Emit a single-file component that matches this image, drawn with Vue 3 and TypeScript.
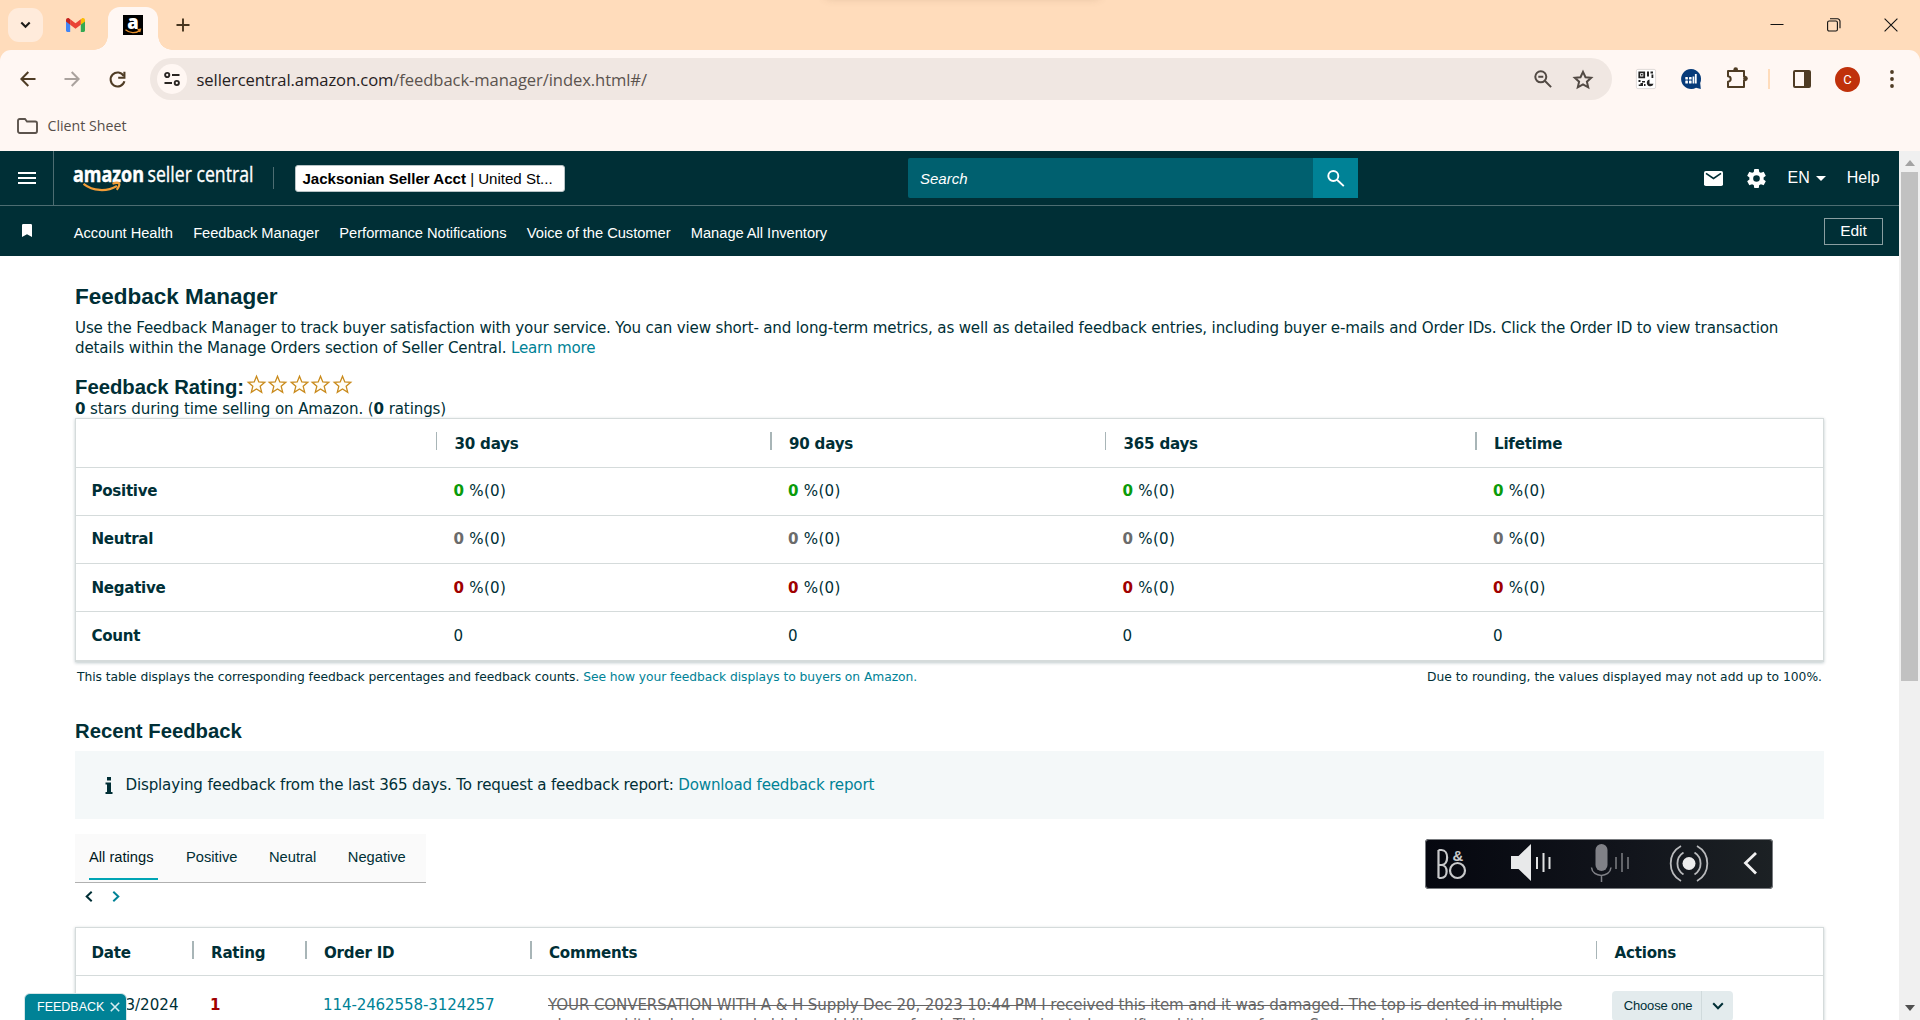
<script setup lang="ts">
interface Row { label: string; tone: string; values: string[] }

const favourites: string[] = ['Account Health', 'Feedback Manager', 'Performance Notifications', 'Voice of the Customer', 'Manage All Inventory']
const periods: string[] = ['30 days', '90 days', '365 days', 'Lifetime']
const rows: Row[] = [
  { label: 'Positive', tone: 'good', values: ['0', '0', '0', '0'] },
  { label: 'Neutral', tone: 'even', values: ['0', '0', '0', '0'] },
  { label: 'Negative', tone: 'bad', values: ['0', '0', '0', '0'] },
  { label: 'Count', tone: '', values: ['0', '0', '0', '0'] },
]
const tabs: string[] = ['All ratings', 'Positive', 'Neutral', 'Negative']
const columns: string[] = ['Date', 'Rating', 'Order ID', 'Comments', 'Actions']
</script>

<template>
  <div class="window">
    <header class="tabstrip">
      <i class="top-shade"></i>
      <button class="tab-search">
        <svg width="11" height="8" viewBox="0 0 11 8"><path d="M1.3 1.5 5.5 5.7 9.7 1.5" fill="none" stroke="#1d1b18" stroke-width="2.1" /></svg>
      </button>
      <svg class="gmail" width="19" height="14" viewBox="0 0 19 14">
        <path d="M0 2v10.6c0 .8.6 1.4 1.3 1.4H4.200V5.200z" fill="#4285f4" />
        <path d="M14.800 5.200V14h2.900c.7 0 1.300-.6 1.300-1.400V2z" fill="#34a853" />
        <path d="M14.800 1.200v5.600L19 3.600V2c0-1.800-2-2.600-3.200-1.600z" fill="#fbbc04" />
        <path d="M4.200 6.800V1.200L9.500 5.200l5.300-4v5.600l-5.300 4z" fill="#ea4335" />
        <path d="M0 2v1.600l4.200 3.200V1.200L3.200.4C2-.6 0 .2 0 2z" fill="#c5221f" />
      </svg>
      <div class="active-tab">
        <svg width="20" height="20" viewBox="0 0 20 20">
          <rect width="20" height="20" fill="#000" />
          <text x="4.300" y="14" font-family="Open Sans, sans-serif" font-weight="800" font-size="20" fill="#fff" textLength="11.500" lengthAdjust="spacingAndGlyphs">a</text>
          <path d="M2.500 14.800c4.300 3.600 10 3.700 14 .8M14.500 14.600l3-.3-.8 2.800" fill="none" stroke="#e8912d" stroke-width="1.300" />
        </svg>
      </div>
      <svg class="new-tab" width="14" height="14" viewBox="0 0 14 14"><path d="M7 .5v13M.5 7h13" stroke="#47351f" stroke-width="1.900" /></svg>
      <div class="controls">
        <svg width="14" height="14" viewBox="0 0 14 14"><path d="M.5 6.500h13" stroke="#111" /></svg>
        <svg width="14" height="14" viewBox="0 0 14 14"><rect x=".6" y="3" width="9.800" height="10" rx="1.500" fill="none" stroke="#111" stroke-width="1.100" /><path d="M3 .8h7.500a2.500 2.500 0 0 1 2.500 2.500v7" fill="none" stroke="#111" stroke-width="1.100" /></svg>
        <svg width="14" height="14" viewBox="0 0 14 14"><path d="M.6.6l12.800 12.800M13.400.6.6 13.400" stroke="#111" stroke-width="1.100" /></svg>
      </div>
    </header>

    <div class="toolbar-back">
      <div class="toolbar">
        <svg class="back" width="16" height="16" viewBox="0 0 16 16"><path d="M15.500 8H1.500M8.300 1 1.400 8l6.900 7" fill="none" stroke="#4f3c24" stroke-width="2" /></svg>
        <svg class="forward" width="16" height="16" viewBox="0 0 16 16"><path d="M.5 8h14M7.700 1l6.900 7-6.900 7" fill="none" stroke="#aaa29d" stroke-width="2" /></svg>
        <svg class="reload" width="17" height="17" viewBox="0 0 17 17"><path d="M14.700 5A7 7 0 1 0 15.400 10.300" fill="none" stroke="#4f3c24" stroke-width="2.100" /><path d="M15.400.8v6H9.200" fill="none" stroke="#4f3c24" stroke-width="2.100" /></svg>
        <div class="omnibox">
          <span class="site-info">
            <svg width="16" height="14" viewBox="0 0 16 14"><g fill="none" stroke="#292522" stroke-width="1.900"><circle cx="3.200" cy="3" r="2.100" /><path d="M8 3h7.500M.5 11H8" /><circle cx="12.800" cy="11" r="2.100" /></g></svg>
          </span>
          <span class="url"><b>sellercentral.amazon.com</b>/feedback-manager/index.html#/</span>
          <svg class="zoom-out" width="18" height="18" viewBox="0 0 18 18"><g fill="none" stroke="#524a44" stroke-width="2"><circle cx="6.800" cy="6.800" r="5.500" /><path d="m10.800 10.800 6.300 6.300M4.300 6.800h5" /></g></svg>
          <svg class="fav" width="20" height="19" viewBox="0 0 20 19"><path d="m10 1.900 2.500 5.300 5.700.6-4.300 3.900 1.300 5.700L10 14.500l-5.200 2.900 1.300-5.700L1.800 7.800l5.700-.6z" fill="none" stroke="#524a44" stroke-width="2" /></svg>
        </div>
        <svg class="ext qr" width="20" height="20" viewBox="0 0 20 20">
          <rect x=".4" y=".4" width="19.200" height="19.200" rx="1.500" fill="#fff" stroke="#d8d2cf" stroke-width=".8" />
          <path d="M3.300 3.300h4.900v5H3.300z" fill="none" stroke="#222" stroke-width="1.800" />
          <g fill="#222"><path d="M5 5h1.600v1.600H5zM11 2.500h2v5h-2zM14.500 2.500H17v2h-2.500zM15.500 5.500h1.800V9h-1.800zM2.500 11h2v2h-2zM6 12h3v1.500H6zM4.500 14H7v3H2.700v-1.500h1.800zM8 15h1.500v2H8z" /><path d="M13.500 10.500a3.400 3.400 0 1 0 4 4.200h-4z" /></g>
        </svg>
        <svg class="ext chat" width="20" height="20" viewBox="0 0 20 20">
          <path d="M10 0a10 10 0 1 0 5 18.700L19.800 20l-.6-6A10 10 0 0 0 10 0z" fill="#073b79" />
          <g fill="#fff"><rect x="4.300" y="8" width="2.600" height="2.600" rx=".6" /><rect x="4.300" y="11.500" width="2.600" height="3" rx=".6" /><rect x="8" y="8" width="2.600" height="2.600" rx=".6" /><rect x="8" y="11.500" width="2.600" height="3" rx=".6" /><rect x="11.600" y="7.500" width="1.700" height="7" /><rect x="13.900" y="5" width="1.800" height="9.500" /></g>
        </svg>
        <svg class="ext puzzle" width="22" height="21" viewBox="0 0 22 21"><path d="M2 4h16v5.500a2 2 0 0 1 0 4V20H2v-5.300c3.600-.4 3.600-5 0-5.400z" fill="none" stroke="#4f3c24" stroke-width="2" stroke-linejoin="round" /><circle cx="9.700" cy="2.500" r="2.300" fill="#4f3c24" /><circle cx="19.500" cy="11.500" r="2.300" fill="#4f3c24" /></svg>
        <i class="divider"></i>
        <svg class="side" width="18" height="18" viewBox="0 0 18 18"><rect x="1" y="1" width="16" height="16" rx="1" fill="none" stroke="#4f3c24" stroke-width="2" /><path d="M11 1h6v16h-6z" fill="#4f3c24" /></svg>
        <span class="avatar">C</span>
        <svg class="dots" width="4" height="18" viewBox="0 0 4 18"><g fill="#4f3c24"><circle cx="2" cy="2" r="1.900" /><circle cx="2" cy="9" r="1.900" /><circle cx="2" cy="16" r="1.900" /></g></svg>
      </div>
      <div class="bookmarks">
        <svg width="21" height="16" viewBox="0 0 21 16"><path d="M1 13V2.800C1 1.700 1.700 1 2.700 1H8l2 2.500h8.300c1 0 1.700.7 1.700 1.700V13c0 1.200-.8 2-1.800 2H2.800C1.700 15 1 14.200 1 13z" fill="none" stroke="#5c534c" stroke-width="1.900" /></svg>
        <span>Client Sheet</span>
      </div>
    </div>

    <div class="viewport">
      <main class="page">
        <div class="masthead">
          <div class="menu"><svg width="18" height="12" viewBox="0 0 18 12"><path d="M0 1h18M0 6h18M0 11h18" stroke="#fff" stroke-width="1.800" /></svg></div>
          <svg class="brand" width="182" height="34" viewBox="0 0 182 34">
            <text x="-1" y="20" font-family="Open Sans, sans-serif" font-weight="700" font-size="22" fill="#fff" stroke="#fff" stroke-width=".5" textLength="71" lengthAdjust="spacingAndGlyphs">amazon</text>
            <text x="73.500" y="20" font-family="Open Sans, sans-serif" font-size="22.500" fill="#fff" stroke="#fff" stroke-width=".35" textLength="106" lengthAdjust="spacingAndGlyphs">seller central</text>
            <path d="M9.500 21.800c9.500 7.500 23 8.200 33.500 2.200M38.500 21.800c3-1.300 6-1 6.700-.5.600 1.500-.7 4.700-2.600 6.500" fill="none" stroke="#f29d38" stroke-width="2.200" />
          </svg>
          <i class="rule"></i>
          <button class="account"><b>Jacksonian Seller Acct</b> | United St...</button>
          <div class="search">
            <span>Search</span>
            <div class="search-go"><svg width="18" height="17" viewBox="0 0 18 17"><g fill="none" stroke="#fff" stroke-width="1.900"><circle cx="6.300" cy="6" r="5" /><path d="m10 9.700 6.800 6.400" /></g></svg></div>
          </div>
          <svg class="mail" width="19" height="15" viewBox="0 0 19 15"><rect width="19" height="15" rx="1.800" fill="#fff" /><path d="m2 2.300 7.500 5.200L17 2.300" fill="none" stroke="#002f36" stroke-width="1.600" /></svg>
          <svg class="gear" width="19" height="19" viewBox="2 2 20 20"><path fill="#fff" d="M19.430 12.980c.04-.32.070-.64.070-.98s-.030-.66-.070-.98l2.110-1.650a.5.5 0 0 0 .12-.64l-2-3.460a.5.500 0 0 0-.61-.22l-2.490 1a7.300 7.300 0 0 0-1.690-.98l-.38-2.650A.49.490 0 0 0 14 2h-4a.49.490 0 0 0-.49.420l-.38 2.650c-.61.250-1.170.590-1.690.98l-2.490-1a.5.500 0 0 0-.61.220l-2 3.460a.5.500 0 0 0 .12.640l2.110 1.650c-.04.320-.070.650-.070.980s.030.660.070.980l-2.110 1.650a.5.500 0 0 0-.12.640l2 3.460c.12.220.39.300.61.220l2.490-1c.52.400 1.080.730 1.690.980l.38 2.650c.03.240.24.420.49.420h4c.25 0 .46-.18.490-.42l.38-2.650a7.300 7.300 0 0 0 1.690-.98l2.490 1c.23.090.49 0 .61-.22l2-3.460a.5.500 0 0 0-.12-.64zM12 15.500a3.500 3.500 0 1 1 0-7 3.500 3.500 0 0 1 0 7z" /></svg>
          <span class="lang">EN</span>
          <svg class="caret" width="10" height="5" viewBox="0 0 10 5"><path d="M0 0h10L5 5z" fill="#fff" /></svg>
          <span class="help">Help</span>
        </div>
        <nav class="favbar">
          <svg class="flag" width="10" height="13" viewBox="0 0 10 13"><path d="M0 1.200Q0 0 1.200 0h7.600Q10 0 10 1.200V13L5 10.300 0 13z" fill="#fff" /></svg>
          <a v-for="f in favourites" :key="f">{{ f }}</a>
          <button class="edit">Edit</button>
        </nav>

        <section class="body">
          <h1>Feedback Manager</h1>
          <p class="intro">Use the Feedback Manager to track buyer satisfaction with your service. You can view short- and long-term metrics, as well as detailed feedback entries, including buyer e-mails and Order IDs. Click the Order ID to view transaction<br />details within the Manage Orders section of Seller Central. <a>Learn more</a></p>
          <div class="rating">
            <h2>Feedback Rating:</h2>
            <svg v-for="n in 5" :key="n" width="19" height="19" viewBox="0 0 19 19"><path d="m9.500 1.200 2.300 5.700 6 .4-4.600 4 1.500 6-5.200-3.300-5.200 3.300 1.500-6-4.600-4 6-.4z" fill="#fffdf6" stroke="#c98a1b" stroke-width="1.300" /></svg>
          </div>
          <div class="stars-note"><b>0</b> stars during time selling on Amazon. (<b>0</b> ratings)</div>

          <div class="summary">
            <div class="tr head"><span class="td"></span><span v-for="p in periods" :key="p" class="td">{{ p }}</span></div>
            <div v-for="r in rows" :key="r.label" class="tr">
              <b class="td">{{ r.label }}</b>
              <span v-for="(v, i) in r.values" :key="i" class="td num"><template v-if="r.tone"><b :class="r.tone">{{ v }}</b> %(0)</template><template v-else>{{ v }}</template></span>
            </div>
          </div>
          <div class="footnote">
            <span class="explain">This table displays the corresponding feedback percentages and feedback counts. <a>See how your feedback displays to buyers on Amazon.</a></span>
            <span>Due to rounding, the values displayed may not add up to 100%.</span>
          </div>

          <h2 class="recent">Recent Feedback</h2>
          <div class="notice">
            <svg width="8" height="17" viewBox="0 0 8 17"><path d="M2 0h4v3.500H2zM.5 5.500H6V15h1.500v2H.5v-2H2V7.500H.5z" fill="#002f36" /></svg>
            <span>Displaying feedback from the last 365 days. To request a feedback report: <a>Download feedback report</a></span>
          </div>

          <div class="tabs"><span v-for="(t, i) in tabs" :key="t" :class="{ on: i === 0 }">{{ t }}</span></div>
          <div class="pager">
            <svg width="8" height="11" viewBox="0 0 8 11"><path d="M6.700.8 1.700 5.500l5 4.700" fill="none" stroke="#002f36" stroke-width="2" /></svg>
            <svg width="8" height="11" viewBox="0 0 8 11"><path d="m1.300.8 5 4.700-5 4.700" fill="none" stroke="#008296" stroke-width="2" /></svg>
          </div>

          <div class="entries">
            <div class="tr head"><span v-for="c in columns" :key="c" class="td">{{ c }}</span></div>
            <div class="tr entry">
              <span class="td date">01/03/2024</span>
              <span class="td"><b class="bad">1</b></span>
              <span class="td"><a>114-2462558-3124257</a></span>
              <span class="td comment"><s>YOUR CONVERSATION WITH A &amp; H Supply Dec 20, 2023 10:44 PM I received this item and it was damaged. The top is dented in multiple</s><br /><s>places and it looks bent and old. I would like a refund. This was going to be a gift and it is one of ours. Some replacement of the load</s></span>
              <span class="td"><span class="choose"><em>Choose one</em><i><svg width="12" height="8" viewBox="0 0 12 8"><path d="m1.200 1.200 4.800 5 4.800-5" fill="none" stroke="#002f36" stroke-width="2" /></svg></i></span></span>
            </div>
          </div>
        </section>
      </main>
      <aside class="scroll">
        <svg width="10" height="6" viewBox="0 0 10 6"><path d="M0 6h10L5 0z" fill="#a3a3a3" /></svg>
        <i class="thumb"></i>
        <svg class="down" width="10" height="6" viewBox="0 0 10 6"><path d="M0 0h10L5 6z" fill="#505050" /></svg>
      </aside>
    </div>

    <div class="audio">
      <svg width="348" height="50" viewBox="0 0 348 50">
        <g fill="none" stroke="#c8c9cb" stroke-width="2.200">
          <path d="M13.500 11v28M13.500 11h3c7.500 0 7.500 15 0 15h-3M16 26c7.500 0 7.500 13 0 13h-2.500" />
          <circle cx="32.500" cy="31.500" r="7.500" />
        </g>
        <text x="27.500" y="21.500" font-family="Liberation Sans, sans-serif" font-weight="700" font-size="15" fill="#c8c9cb">&amp;</text>
        <path d="M86 17h7.500L106 5v37L93.500 30H86z" fill="#e8e9ea" />
        <path d="M112 18v12M118.500 14v19M124.500 18v12" stroke="#e0e1e2" stroke-width="2" />
        <rect x="170.500" y="5" width="12" height="27" rx="6" fill="#808187" />
        <path d="M166.500 28.500c1 10.500 18.500 10.500 19.500 0M176.500 36v7" fill="none" stroke="#808187" stroke-width="1.500" />
        <path d="M191 18v12M197 14v19M203 18v12" stroke="#626469" stroke-width="2" />
        <circle cx="264" cy="24.500" r="6.500" fill="#ececec" />
        <g fill="none" stroke="#b9babc" stroke-width="1.800"><path d="M258.500 13.500a13 13 0 0 0 0 22M269.500 13.500a13 13 0 0 1 0 22M256 7a20 20 0 0 0 0 35M272 7a20 20 0 0 1 0 35" /></g>
        <path d="m331 14-10.500 10L331 34.500" fill="none" stroke="#f0f0f0" stroke-width="2.800" />
      </svg>
    </div>
    <div class="feedback">FEEDBACK <svg width="10" height="10" viewBox="0 0 10 10"><path d="m.8.800 8.400 8.400M9.200.8.8 9.200" stroke="#d5ecef" stroke-width="1.600" /></svg></div>
  </div>
</template>

<style>
body { margin: 0; overflow: hidden; }
</style>

<style scoped>
* { box-sizing: border-box; }
svg { display: block; flex: none; overflow: visible; }
button { font: inherit; border: 0; padding: 0; margin: 0; background: none; color: inherit; }
.window { position: relative; width: 1920px; height: 1020px; overflow: hidden; display: flex; flex-direction: column; background: #fff; font-family: "DejaVu Sans", sans-serif; font-size: 15.1px; color: #002f36; white-space: nowrap; }

.tabstrip { position: relative; height: 50px; flex: none; display: flex; align-items: center; background: #ffdcbb; padding-left: 8px; }
.top-shade { position: absolute; left: 825px; top: -12px; width: 275px; height: 10px; border-radius: 5px; box-shadow: 0 0 8px rgba(120, 90, 60, 0.25); }
.tab-search { width: 35px; height: 34px; border-radius: 11px; background: #ffebdb; display: flex; align-items: center; justify-content: center; }
.gmail { margin-left: 22.5px; }
.active-tab { position: relative; align-self: flex-end; width: 50px; height: 43px; margin-left: 23.5px; padding: 8px 15px; background: #fff7f3; border-radius: 12px 12px 0 0; }
.active-tab::before, .active-tab::after { content: ""; position: absolute; bottom: 0; width: 14px; height: 14px; }
.active-tab::before { left: -14px; background: radial-gradient(circle at 0 0, transparent 13.5px, #fff7f3 14px); }
.active-tab::after { right: -14px; background: radial-gradient(circle at 100% 0, transparent 13.5px, #fff7f3 14px); }
.new-tab { margin-left: 18px; }
.controls { margin-left: auto; margin-right: 22px; display: flex; gap: 43px; }

.toolbar-back { height: 101px; flex: none; background: linear-gradient(#ffdcbb 20px, #fff7f3 20px); }
.toolbar { height: 58px; padding: 8px 0 8px 20px; display: flex; align-items: center; background: #fff7f3; border-radius: 11px 11px 0 0; }
.forward { margin-left: 28px; }
.reload { margin-left: 29px; }
.omnibox { width: 1462px; height: 42px; margin-left: 24px; padding: 0 19px 0 6.5px; border-radius: 21px; background: #f0e7e2; display: flex; align-items: center; }
.site-info { width: 30px; height: 30px; border-radius: 50%; background: #fff7f3; display: flex; align-items: center; justify-content: center; }
.url { margin-left: 10px; margin-bottom: 0; font: 16.6px "Open Sans", sans-serif; letter-spacing: -0.09px; color: #5b534e; }
.url b { font-weight: 400; color: #26211e; }
.zoom-out { margin-left: auto; }
.fav { margin-left: 21px; }
.qr { margin-left: 23.5px; }
.chat { margin-left: 25px; }
.puzzle { margin-left: 25px; margin-top: -3px; }
.divider { width: 2px; height: 20px; margin-left: 20.5px; background: #ffdcbb; }
.side { margin-left: 23px; }
.avatar { width: 25px; height: 25px; margin-left: 24px; border-radius: 50%; background: #c0310b; color: #fff; font: 13px/25px Roboto, sans-serif; text-align: center; }
.dots { margin-left: 30px; }
.bookmarks { display: flex; align-items: center; gap: 9.5px; padding: 7px 0 0 17px; font: 14.2px/22px "Open Sans", sans-serif; color: #564e49; }

.viewport { height: 869px; display: flex; }
.page { width: 1899px; flex: none; overflow: hidden; }
.masthead { height: 55px; display: flex; align-items: center; background: #002f36; border-bottom: 1px solid #4d6d72; color: #fff; font: 16px "Liberation Sans", sans-serif; }
.menu { width: 54px; height: 54px; padding-left: 18px; display: flex; align-items: center; border-right: 1px solid #4d6d72; }
.brand { margin: 2px 0 0 20px; }
.rule { width: 1px; height: 22px; margin-left: 17px; background: #4d6d72; }
.account { width: 270px; height: 27px; margin-left: 21px; padding-left: 6.500px; border: 1px solid #b9c4c6; border-radius: 3px; background: #fff; color: #000; text-align: left; font-size: 15.1px; letter-spacing: -0.02px; }
.search { width: 450px; height: 40px; margin-left: 343px; border-radius: 2px; background: #00606f; display: flex; align-items: center; justify-content: space-between; font-size: 15px; font-style: italic; padding-left: 12px; }
.search-go { width: 45px; height: 40px; background: #008296; display: flex; align-items: center; justify-content: center; }
.mail { margin-left: 345.500px; }
.gear { margin-left: 24px; }
.lang { margin-left: 22px; }
.caret { margin: 1px 0 0 6px; }
.help { margin-left: 21px; }
.favbar { height: 50px; padding: 0 16px 0 22px; display: flex; align-items: center; background: #002f36; font: 14.7px "Liberation Sans", sans-serif; color: #fff; }
.flag { margin: -1px 21.5px 0 0; }
a { color: #008296; }
.favbar a { margin-left: 20.3px; margin-top: 3px; color: #fff; letter-spacing: -0.04px; }
.edit { width: 59px; height: 27px; margin-left: auto; border: 1px solid #8a9ea1; font-size: 15.5px; }

.body { padding: 26px 75px 0; letter-spacing: -0.17px; }
h1, h2 { margin: 0; font-family: "Liberation Sans", sans-serif; letter-spacing: 0; }
h1 { font-size: 22.5px; line-height: 30px; }
h2 { font-size: 20.3px; line-height: 26px; }
.intro { margin: 6px 0 16px; line-height: 20px; }
.rating { display: flex; align-items: center; height: 26px; }
.rating h2 { width: 171.500px; }
.rating svg { margin: -5px 2.5px 0 0; }
.stars-note { line-height: 18px; letter-spacing: -0.12px; }
.summary, .entries { width: 1749px; border: 1px solid #d5dbdb; border-bottom-width: 2px; box-shadow: 0 1px 3px rgba(0, 47, 54, 0.25); }
.tr { display: grid; align-items: center; height: 48.3px; border-bottom: 1px solid #d5dbdb; }
.summary .tr { grid-template-columns: 359.5px 334.5px 334.5px 370.5px 1fr; }
.summary .tr:last-child { border-bottom: 0; height: 47.500px; }
.summary .tr > b { letter-spacing: -0.3px; }
.td { position: relative; padding-left: 18px; }
.num { letter-spacing: 0.25px; }
.td:first-child { padding-left: 15.5px; }
.summary .head, .entries .head { font-weight: 700; height: 48.500px; padding-top: 2px; letter-spacing: -0.22px; }
.head .td { padding-left: 19px; }
.head .td:first-child { padding-left: 15.5px; }
.head .td + .td::before { content: ""; position: absolute; left: 0; top: 50%; margin-top: -12px; width: 1.500px; height: 18px; background: #a8b5b7; }
.good { color: #0a9b0a; }
.even { color: #6b6b6b; }
.bad { color: #a00000; }
.footnote { display: flex; justify-content: space-between; margin-top: 5px; padding: 0 2px; font-size: 12.3px; line-height: 20px; letter-spacing: 0; }
.explain { letter-spacing: -0.06px; }
.recent { margin-top: 31px; }
.notice { height: 68px; margin-top: 7px; padding: 1px 0 0 30px; display: flex; align-items: center; gap: 12.500px; background: #f4f8f9; }
.tabs { width: 351px; height: 49px; margin-top: 15px; padding-left: 14px; display: flex; background: #fafafa; border-bottom: 1px solid #b0b0b0; font: 14.700px/46px "Liberation Sans", sans-serif; letter-spacing: 0; }
.tabs span { flex: none; height: 46px; margin-right: 31.500px; }
.tabs .on { width: 69px; margin-right: 28px; border-bottom: 2px solid #00a4b4; color: #00191d; }
.pager { display: flex; gap: 19px; padding: 8px 0 0 10px; height: 44px; }
.entries { border-bottom: 0; height: 120px; }
.entries .tr { grid-template-columns: 116px 113px 225px 1065.500px 1fr; }
.entries .entry { height: 120px; align-items: start; padding-top: 18.500px; line-height: 20px; letter-spacing: -0.14px; }
.date { letter-spacing: 0; }
.comment { color: #666; }
.choose { display: flex; width: 121px; height: 30px; margin: -4px 0 0 -1.500px; border-radius: 4px; background: #e3ebed; font: 13px/30px "Liberation Sans", sans-serif; }
.choose em { width: 90px; padding-left: 3px; font-style: normal; text-align: center; border-right: 1px solid #d0dadc; }
.choose i { width: 31px; display: flex; align-items: center; justify-content: center; }

.scroll { width: 21px; background: #f0f0f0; display: flex; flex-direction: column; align-items: center; padding: 9px 0; }
.thumb { width: 17px; height: 509px; margin-top: 6px; background: #c1c1c1; }
.down { margin-top: auto; }

.audio { position: absolute; left: 1425px; top: 839px; width: 348px; height: 50px; border-radius: 4px; background: linear-gradient(90deg, #05070f, #12151c 60%, #1c2124); box-shadow: inset 0 0 0 1px #777a7e; }
.feedback { position: absolute; left: 24px; top: 993px; width: 103px; height: 30px; padding: 0 0 2px 12px; display: flex; gap: 6px; align-items: center; border: 1px solid #d5e5e7; border-radius: 6px 6px 0 0; background: #008296; color: #fff; font: 12.500px "Liberation Sans", sans-serif; }
</style>
